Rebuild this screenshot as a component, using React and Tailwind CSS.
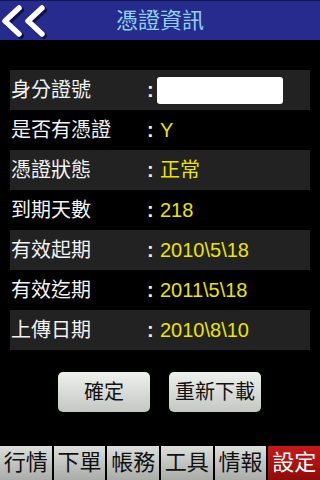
import React from 'react';

const rows = [
  { label: '身分證號', value: null },
  { label: '是否有憑證', value: 'Y' },
  { label: '憑證狀態', value: '正常' },
  { label: '到期天數', value: '218' },
  { label: '有效起期', value: '2010\\5\\18' },
  { label: '有效迄期', value: '2011\\5\\18' },
  { label: '上傳日期', value: '2010\\8\\10' },
];

const tabs = ['行情', '下單', '帳務', '工具', '情報', '設定'];

const BackIcon = () => (
  <svg width="48" height="40" viewBox="0 0 48 40">
    {/* shadow */}
    <g stroke="#0a0c30" strokeWidth="6" fill="none" strokeLinecap="round" strokeLinejoin="round" opacity="0.8">
      <polyline points="21,9 7,22 21,35" />
      <polyline points="44,9 30,22 44,35" />
    </g>
    <g stroke="#ffffff" strokeWidth="5.5" fill="none" strokeLinecap="round" strokeLinejoin="round">
      <polyline points="19,7 5,20 19,33" />
      <polyline points="42,7 28,20 42,33" />
    </g>
  </svg>
);

export default function App() {
  return (
    <div
      className="w-[320px] h-[480px] bg-black flex flex-col overflow-hidden"
      style={{ fontFamily: '"Liberation Sans", "Noto Sans CJK TC", sans-serif' }}
    >
      {/* Header */}
      <div className="h-[40px] bg-[#272b8e] border-t border-[#141650] flex items-center relative">
        <div className="absolute left-0 top-0">
          <BackIcon />
        </div>
        <div className="flex-1 text-center text-[22px] text-[#8ed3f2] leading-none">憑證資訊</div>
      </div>

      {/* Info rows */}
      <div className="mt-[30px] mx-[10px] flex flex-col">
        {rows.map((row, i) => (
          <div
            key={row.label}
            className={`h-[40px] flex items-center text-[20px] leading-none ${i % 2 === 0 ? 'bg-[#222222]' : 'bg-black'}`}
          >
            <div className="w-[137px] pl-[1px] text-[#f2f2f2]">{row.label}</div>
            <div className="w-[13px] text-[#f2f2f2] font-bold">:</div>
            {row.value === null ? (
              <div className="w-[126px] h-[27px] bg-white rounded-[3px] -ml-[3px]" />
            ) : (
              <div className="text-[#ece400]">{row.value}</div>
            )}
          </div>
        ))}
      </div>

      {/* Buttons */}
      <div className="mt-[22px] flex justify-center gap-[19px] pr-[1px]">
        <button className="w-[92px] h-[40px] rounded-[5px] bg-gradient-to-b from-[#eef0ee] to-[#c4c8c4] text-[20px] text-[#111]">
          確定
        </button>
        <button className="w-[92px] h-[40px] rounded-[5px] bg-gradient-to-b from-[#eef0ee] to-[#c4c8c4] text-[20px] text-[#111]">
          重新下載
        </button>
      </div>

      {/* Bottom tabs */}
      <div className="mt-auto h-[34px] grid grid-cols-6 gap-[2px]">
        {tabs.map((t, i) => (
          <div
            key={t}
            className={`flex items-center justify-center text-[22px] leading-none ${
              i === 5
                ? 'bg-gradient-to-b from-[#c41a1a] to-[#8e0c0c] text-white'
                : 'bg-gradient-to-b from-[#dcdedc] to-[#a9aca9] text-[#111]'
            }`}
          >
            {t}
          </div>
        ))}
      </div>
    </div>
  );
}
